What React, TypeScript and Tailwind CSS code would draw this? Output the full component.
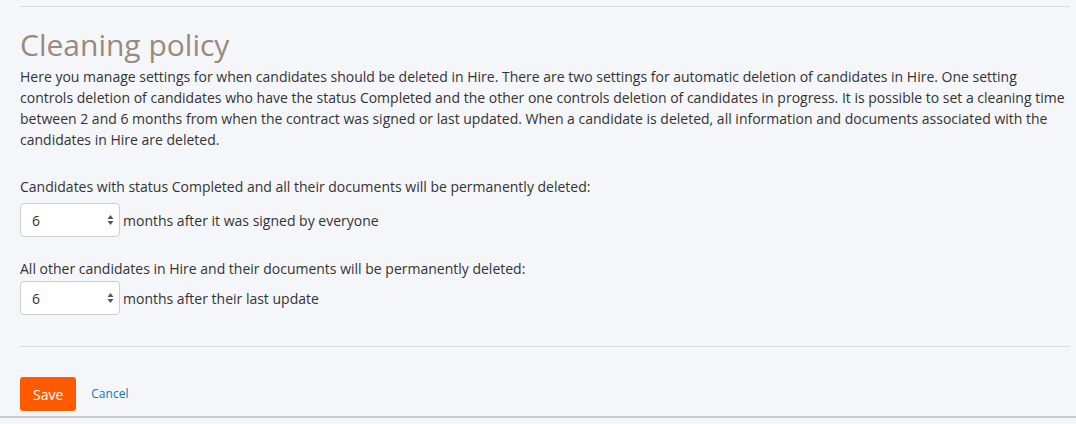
import { useState } from "react";

function UpDown() {
  return (
    <svg width="7" height="11" viewBox="0 0 7 11" className="pointer-events-none absolute right-[6px] top-1/2 -translate-y-1/2" aria-hidden>
      <path d="M3.5 0.5 L6.5 4.5 H0.5 Z" fill="#555" />
      <path d="M3.5 10.5 L6.5 6.5 H0.5 Z" fill="#555" />
    </svg>
  );
}

function MonthSelect({ value, onChange }: { value: number; onChange: (v: number) => void }) {
  return (
    <div className="relative w-[100px]">
      <select
        value={value}
        onChange={(e) => onChange(Number(e.target.value))}
        className="h-[34px] w-full appearance-none rounded-[4px] border border-[#cfcfcf] bg-white pl-[11px] text-[14px] text-[#333] outline-none"
      >
        {[2, 3, 4, 5, 6].map((m) => (
          <option key={m} value={m}>
            {m}
          </option>
        ))}
      </select>
      <UpDown />
    </div>
  );
}

export default function App() {
  const [completed, setCompleted] = useState(6);
  const [other, setOther] = useState(6);

  return (
    <div
      className="min-h-[424px] w-full bg-[#f5f6fa] text-[#333]"
      style={{ fontFamily: '"Open Sans", "Liberation Sans", sans-serif' }}
    >
      <div className="px-[20px] pt-[6px]">
        <div className="mr-[-14px] border-t border-[#d9d9d9]" />
        <h1 className="mt-[20px] text-[30px] leading-[36px] text-[#9a8a7c]">Cleaning policy</h1>
        <p className="mr-[-14px] mt-[3px] text-[14px] leading-[21px]">
          Here you manage settings for when candidates should be deleted in Hire. There are two settings for automatic
          deletion of candidates in Hire. One setting controls deletion of candidates who have the status Completed and
          the other one controls deletion of candidates in progress. It is possible to set a cleaning time between 2 and
          6 months from when the contract was signed or last updated. When a candidate is deleted, all information and
          documents associated with the candidates in Hire are deleted.
        </p>

        <p className="mt-[27px] text-[14px] leading-[20px]">
          Candidates with status Completed and all their documents will be permanently deleted:
        </p>
        <div className="mt-[6px] flex items-center gap-[3px]">
          <MonthSelect value={completed} onChange={setCompleted} />
          <span className="text-[14px]">months after it was signed by everyone</span>
        </div>

        <p className="mt-[22px] text-[14px] leading-[20px]">
          All other candidates in Hire and their documents will be permanently deleted:
        </p>
        <div className="mt-[2px] flex items-center gap-[3px]">
          <MonthSelect value={other} onChange={setOther} />
          <span className="text-[14px]">months after their last update</span>
        </div>

        <div className="mr-[-14px] mt-[31px] border-t border-[#d9d9d9]" />

        <div className="mt-[30px] flex items-center gap-[15px]">
          <button
            type="button"
            className="h-[34px] rounded-[3px] bg-[#ff5a00] px-[13px] text-[14px] font-medium text-white"
          >
            Save
          </button>
          <a href="#" className="text-[12px] text-[#0a78be]">
            Cancel
          </a>
        </div>
      </div>
      <div className="mt-[5px] border-t-2 border-[#cccccc]" />
    </div>
  );
}
